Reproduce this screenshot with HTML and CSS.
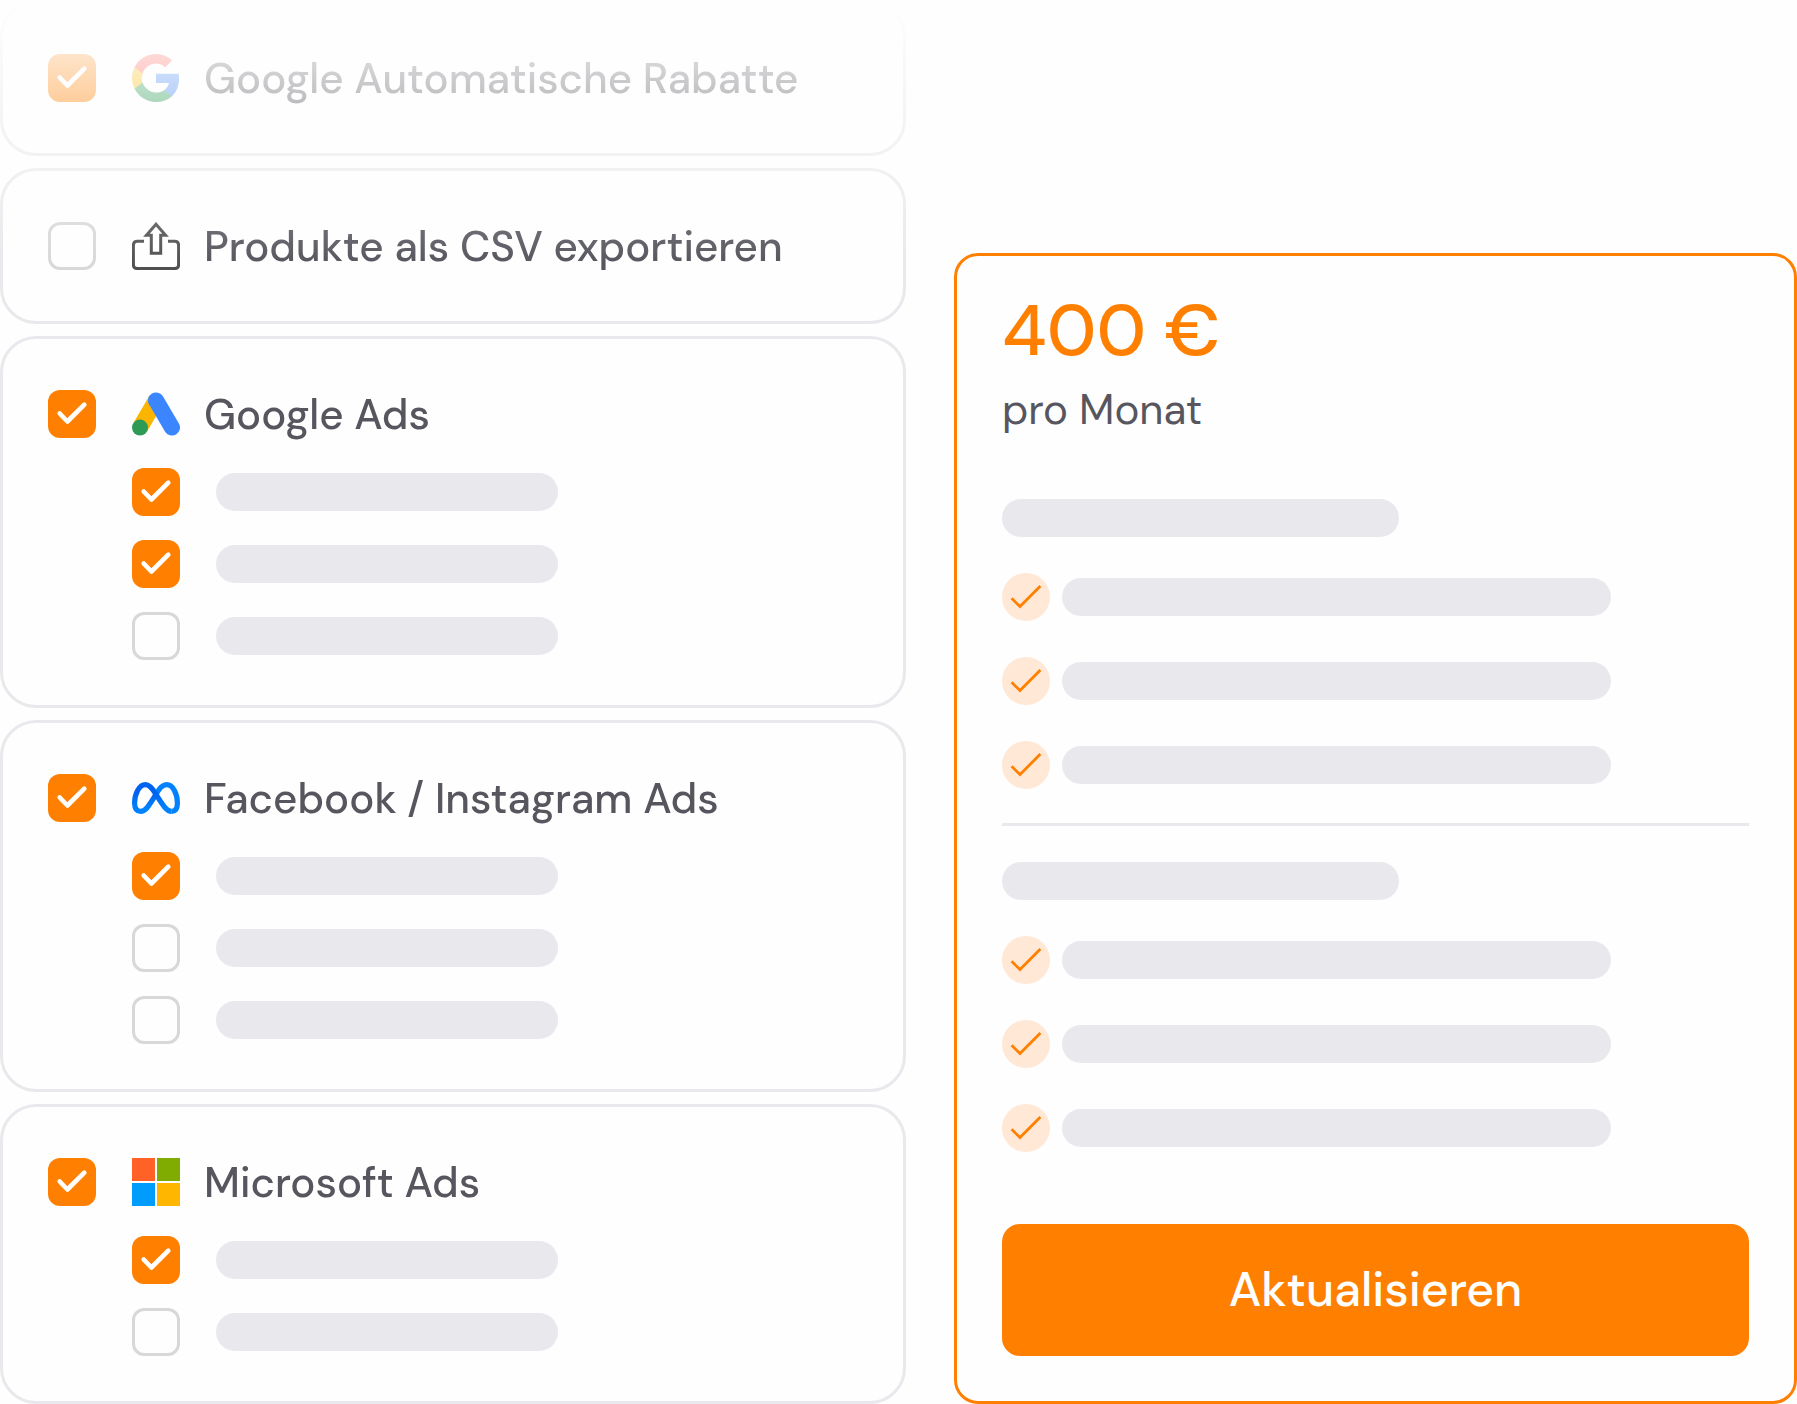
FILE: index.html
```html
<!DOCTYPE html>
<html lang="de">
<head>
<meta charset="utf-8">
<meta name="viewport" content="width=device-width, initial-scale=1">
<title>Kanäle und Preis</title>
<link rel="stylesheet" href="styles.css">
</head>
<body>
<main class="layout">
  <form class="channels" id="channels">
    <section class="card">
      <div class="channel">
        <input class="check" type="checkbox" id="rabatte" checked>
        <svg class="logo" viewBox="1 1 22 22" aria-hidden="true">
          <path fill="#4285f4" d="M22.56 12.25c0-.78-.07-1.53-.2-2.25H12v4.26h5.92c-.26 1.37-1.04 2.53-2.21 3.31v2.77h3.57c2.08-1.92 3.28-4.74 3.28-8.09z"/>
          <path fill="#2d9b55" d="M12 23c2.97 0 5.46-.98 7.28-2.66l-3.57-2.77c-.98.66-2.23 1.06-3.71 1.06-2.86 0-5.29-1.93-6.16-4.53H2.18v2.84C3.99 20.53 7.7 23 12 23z"/>
          <path fill="#fbbc05" d="M5.84 14.09c-.22-.66-.35-1.36-.35-2.09s.13-1.43.35-2.09V7.07H2.18C1.43 8.55 1 10.22 1 12s.43 3.45 1.18 4.93l2.85-2.22.81-.62z"/>
          <path fill="#ff4d45" d="M12 5.38c1.62 0 3.06.56 4.21 1.64l3.15-3.15C17.45 2.09 14.97 1 12 1 7.7 1 3.99 3.47 2.18 7.07l3.66 2.84c.87-2.6 3.3-4.53 6.16-4.53z"/>
        </svg>
        <label for="rabatte">Google Automatische Rabatte</label>
      </div>
    </section>

    <section class="card">
      <div class="channel">
        <input class="check" type="checkbox" id="csv">
        <svg class="logo" viewBox="0 0 48 48" fill="none" stroke="#505050" stroke-width="3" stroke-linejoin="round" aria-hidden="true">
          <path d="M12 19.3H5.4Q1.4 19.3 1.4 23.3V42.6Q1.4 46.6 5.4 46.6H42.6Q46.6 46.6 46.6 42.6V23.3Q46.6 19.3 42.6 19.3H36"/>
          <path stroke-linejoin="miter" d="M24 2.2 33.6 13.2H28.7V31.2H19.3V13.2H14.4Z"/>
        </svg>
        <label for="csv">Produkte als CSV exportieren</label>
      </div>
    </section>

    <section class="card">
      <div class="channel">
        <input class="check" type="checkbox" id="gads" checked>
        <svg class="logo" viewBox="0 0 48 48" fill="none" stroke-width="16" aria-hidden="true">
          <path stroke="#fbb400" d="M8 37.6 24 10.4"/>
          <path stroke="#3b86ff" stroke-linecap="round" d="M24 10.4 40 37.6"/>
          <circle cx="8" cy="37.6" r="8" fill="#2d9b55"/>
        </svg>
        <label for="gads">Google Ads</label>
      </div>
      <ul class="options">
        <li><input class="check" type="checkbox" aria-label="Google Ads Option 1" checked><span class="bar"></span></li>
        <li><input class="check" type="checkbox" aria-label="Google Ads Option 2" checked><span class="bar"></span></li>
        <li><input class="check" type="checkbox" aria-label="Google Ads Option 3"><span class="bar"></span></li>
      </ul>
    </section>

    <section class="card">
      <div class="channel">
        <input class="check" type="checkbox" id="meta" checked>
        <svg class="logo" viewBox="0 0 48 48" fill="none" stroke-width="5.2" aria-hidden="true">
          <defs>
            <linearGradient id="meta-left" x1="0" y1="0" x2="0" y2="1">
              <stop offset="0.3" stop-color="#0062ee"/>
              <stop offset="0.9" stop-color="#0082ff"/>
            </linearGradient>
          </defs>
          <path stroke="#0082ff" d="M24 20.4C27.5 13.8 30.5 10.6 34.7 10.6 41 10.6 45.4 20 45.4 29 45.4 34.5 43.4 37.4 39.7 37.4"/>
          <path stroke="url(#meta-left)" d="M39.7 37.4C35 37.4 31.5 32.5 24 20.4 20 13.5 17 10.6 13.5 10.6 7 10.6 2.6 20 2.6 29 2.6 34.5 4.8 37.4 8.8 37.4 13.5 37.4 16.5 32.5 24 20.4"/>
        </svg>
        <label for="meta">Facebook / Instagram Ads</label>
      </div>
      <ul class="options">
        <li><input class="check" type="checkbox" aria-label="Facebook Option 1" checked><span class="bar"></span></li>
        <li><input class="check" type="checkbox" aria-label="Facebook Option 2"><span class="bar"></span></li>
        <li><input class="check" type="checkbox" aria-label="Facebook Option 3"><span class="bar"></span></li>
      </ul>
    </section>

    <section class="card">
      <div class="channel">
        <input class="check" type="checkbox" id="msads" checked>
        <svg class="logo" viewBox="0 0 48 48" aria-hidden="true">
          <path fill="#ff6126" d="M0 0h23v23H0z"/>
          <path fill="#80ab00" d="M25 0h23v23H25z"/>
          <path fill="#009cfb" d="M0 25h23v23H0z"/>
          <path fill="#ffb600" d="M25 25h23v23H25z"/>
        </svg>
        <label for="msads">Microsoft Ads</label>
      </div>
      <ul class="options">
        <li><input class="check" type="checkbox" aria-label="Microsoft Ads Option 1" checked><span class="bar"></span></li>
        <li><input class="check" type="checkbox" aria-label="Microsoft Ads Option 2"><span class="bar"></span></li>
      </ul>
    </section>
  </form>

  <aside class="plan">
    <p class="price">400 €</p>
    <p class="period">pro Monat</p>
    <div class="group">
      <span class="bar bar-title"></span>
      <ul class="features">
        <li><span class="tick"></span><span class="bar bar-long"></span></li>
        <li><span class="tick"></span><span class="bar bar-long"></span></li>
        <li><span class="tick"></span><span class="bar bar-long"></span></li>
      </ul>
    </div>
    <hr class="divider">
    <div class="group">
      <span class="bar bar-title"></span>
      <ul class="features">
        <li><span class="tick"></span><span class="bar bar-long"></span></li>
        <li><span class="tick"></span><span class="bar bar-long"></span></li>
        <li><span class="tick"></span><span class="bar bar-long"></span></li>
      </ul>
    </div>
    <button class="update" type="submit" form="channels">Aktualisieren</button>
  </aside>
</main>
</body>
</html>
```

FILE: styles.css
```css
:root {
  --orange: #ff8000;
  --text: #57565e;
  --line: #e9e8ec;
  --surface: #fefefe;
}

* {
  box-sizing: border-box;
}

body {
  margin: 0;
  background: var(--surface);
  color: var(--text);
  font-family: "DM Sans", "Open Sans", sans-serif;
  font-size: 42px;
  line-height: 48px;
}

ul,
p {
  margin: 0;
  padding: 0;
  list-style: none;
}

.layout {
  display: grid;
  grid-template-columns: minmax(0, 906fr) minmax(0, 843fr);
  gap: 48px;
}

/* Channel list, fading out towards the top */
.channels {
  display: flex;
  flex-direction: column;
  gap: 12px;
  mask-image: linear-gradient(to bottom, transparent 0, #000 264px);
}

.card {
  display: flex;
  flex-direction: column;
  gap: 24px;
  padding: 45px;
  border: 3px solid var(--line);
  border-radius: 36px;
}

.channel {
  display: flex;
  align-items: center;
  min-height: 60px;
  font-weight: 500;
}

.channel label {
  padding-top: 2px;
}

.logo {
  flex: none;
  width: 48px;
  height: 48px;
  margin: 0 24px 0 36px;
}

.check {
  appearance: none;
  flex: none;
  width: 48px;
  height: 48px;
  margin: 0;
  border: 3px solid #d8d8da;
  border-radius: 12px;
}

.check:checked {
  border: 0;
  background: var(--orange) url("data:image/svg+xml,%3Csvg xmlns='http://www.w3.org/2000/svg' viewBox='0 0 48 48' fill='none' stroke='%23fff' stroke-width='4.6' stroke-linecap='round' stroke-linejoin='round'%3E%3Cpath d='M11.7 23.5l7.7 8L36.3 14.6'/%3E%3C/svg%3E") center / 48px no-repeat;
}

.options {
  display: flex;
  flex-direction: column;
  gap: 24px;
  padding-left: 84px;
}

.options li {
  display: flex;
  align-items: center;
  gap: 36px;
}

.bar {
  display: block;
  width: 342px;
  max-width: 100%;
  height: 38px;
  border-radius: 19px;
  background: var(--line);
}

.bar-title {
  width: 397px;
}

.bar-long {
  width: 549px;
}

/* Plan summary */
.plan {
  align-self: end;
  display: flex;
  flex-direction: column;
  padding: 45px;
  border: 3px solid var(--orange);
  border-radius: 24px;
}

.price {
  color: var(--orange);
  font-size: 72px;
  font-weight: 500;
  line-height: 60px;
}

.period {
  margin: 25px 0 65px;
}

.group,
.features {
  display: flex;
  flex-direction: column;
  gap: 36px;
}

.features li {
  display: flex;
  align-items: center;
  gap: 12px;
}

.tick {
  flex: none;
  width: 48px;
  height: 48px;
  border-radius: 50%;
  background: #ffe8d6 url("data:image/svg+xml,%3Csvg xmlns='http://www.w3.org/2000/svg' viewBox='0 0 48 48' fill='none' stroke='%23ff8000' stroke-width='2.8'%3E%3Cpath d='M9.6 25.3l8.4 8.3L38.4 13'/%3E%3C/svg%3E") center / 48px no-repeat;
}

.divider {
  width: 100%;
  height: 3px;
  margin: 34px 0 36px;
  border: 0;
  background: var(--line);
}

.update {
  height: 132px;
  margin-top: 72px;
  border: 0;
  border-radius: 18px;
  background: var(--orange);
  color: #fff;
  font: inherit;
  font-size: 48px;
  font-weight: 500;
  cursor: pointer;
}
```
